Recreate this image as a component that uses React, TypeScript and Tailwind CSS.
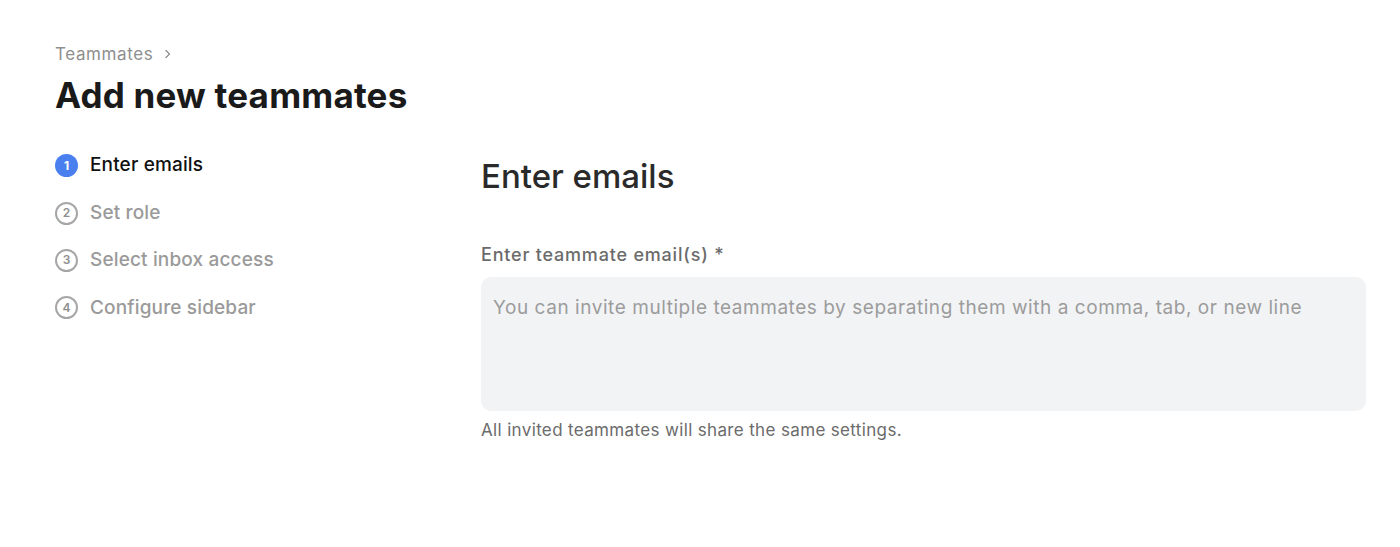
import React from "react";

const steps = ["Enter emails", "Set role", "Select inbox access", "Configure sidebar"];

export default function App() {
  return (
    <div className="min-h-[547px] bg-white pl-[55px] pr-[34px] pt-[43px] font-['Inter','Noto_Sans',sans-serif]">
      <div className="flex items-center gap-[10px] text-[17px] leading-[22px] tracking-[0.6px] text-[#8e8e8e]">
        <span>Teammates</span>
        <svg width="10" height="12" viewBox="0 0 10 12" fill="none" stroke="#8e8e8e" strokeWidth="1.3" strokeLinecap="round" strokeLinejoin="round">
          <path d="M3 2.5 L6.5 6 L3 9.5" />
        </svg>
      </div>
      <h1 className="mt-[8px] text-[35px] font-bold leading-[44px] tracking-[0.2px] text-[#1a1a1a]">Add new teammates</h1>
      <div className="mt-[26px] flex">
        <div className="w-[426px] shrink-0">
          {steps.map((s, i) => (
            <div key={s} className="flex h-[47.4px] items-center gap-[12px] first:-mt-[1px]">
              {i === 0 ? (
                <div className="flex h-[23px] w-[23px] items-center justify-center rounded-full bg-[#4a7ff0] text-[12px] font-bold text-white">1</div>
              ) : (
                <div className="flex h-[23px] w-[23px] items-center justify-center rounded-full border-[2px] border-[#a6a6a6] text-[12px] font-semibold text-[#8e8e8e]">{i + 1}</div>
              )}
              <span className={i === 0 ? "text-[19px] font-medium tracking-[0.15px] text-[#111]" : "text-[19px] font-medium tracking-[0.15px] text-[#9a9a9a]"}>{s}</span>
            </div>
          ))}
        </div>
        <div className="flex-1">
          <h2 className="mt-[12px] text-[33px] font-medium leading-[42px] text-[#2a2a2a]">Enter emails</h2>
          <label className="mt-[47px] block text-[18px] font-medium leading-[22px] tracking-[0.8px] text-[#6b6b6b]">Enter teammate email(s) *</label>
          <textarea
            className="mt-[11px] block h-[134px] w-full resize-none rounded-[10px] bg-[#f2f3f5] px-[12px] pt-[19px] pb-[12px] text-[19px] leading-[24px] tracking-[0.55px] text-[#222] outline-none placeholder:text-[#9c9c9c]"
            placeholder="You can invite multiple teammates by separating them with a comma, tab, or new line"
          />
          <p className="mt-[9px] text-[17px] leading-[20px] tracking-[0.35px] text-[#6b6b6b]">All invited teammates will share the same settings.</p>
        </div>
      </div>
    </div>
  );
}
